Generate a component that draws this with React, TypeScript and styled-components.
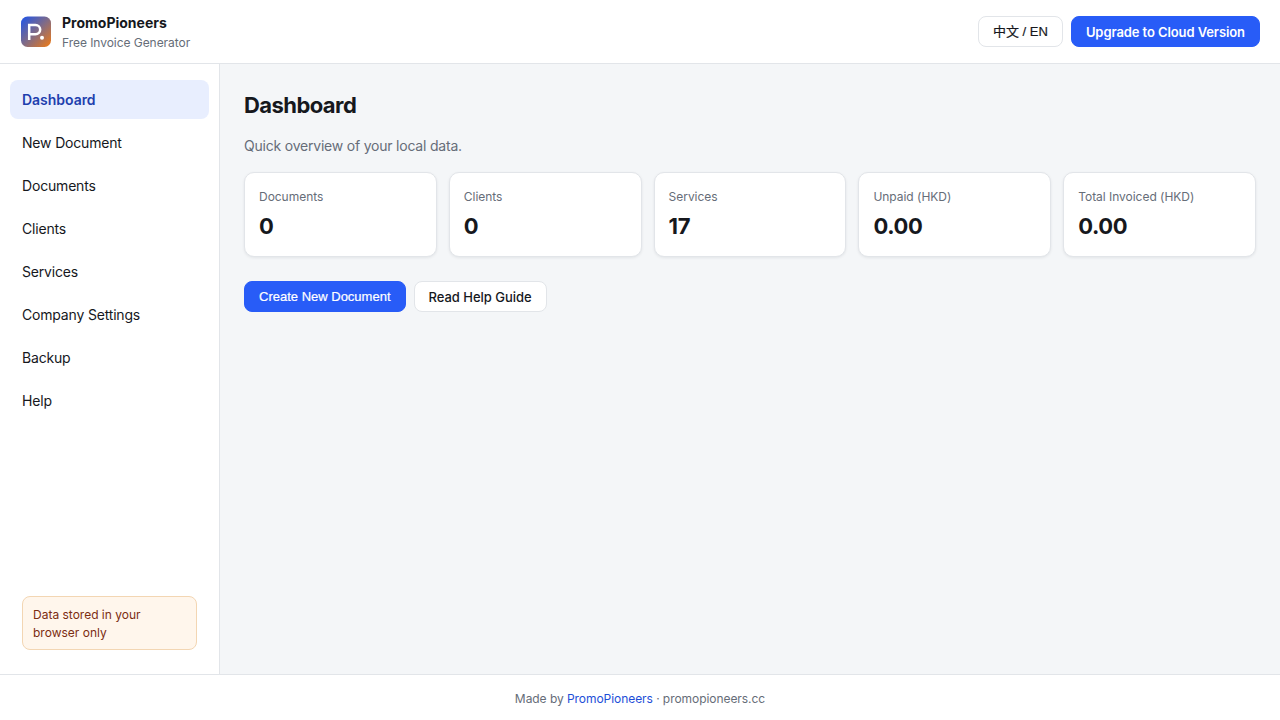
import React from "react";
import styled, { createGlobalStyle, css } from "styled-components";

const GlobalStyle = createGlobalStyle`
  * { box-sizing: border-box; }
  body {
    margin: 0;
    background: #f4f6f8;
    color: #16181d;
    font: 14px/1.5 Inter, "Noto Sans CJK SC", sans-serif;
  }
`;

const Shell = styled.div`
  display: flex;
  flex-direction: column;
  height: 100vh;
`;

const Header = styled.header`
  display: flex;
  align-items: center;
  justify-content: space-between;
  height: 64px;
  flex: none;
  padding: 0 20px;
  background: #fff;
  border-bottom: 1px solid #e2e5e9;
`;

const Brand = styled.div`
  display: flex;
  align-items: center;
  gap: 10px;
`;

const Logo = styled.svg`
  display: block;
  width: 32px;
  height: 32px;
`;

const BrandText = styled.div`
  padding-top: 2px;
`;

const BrandName = styled.div`
  font-size: 14px;
  font-weight: 700;
  line-height: 20px;
`;

const BrandTag = styled.div`
  color: #666d78;
  font-size: 12px;
  line-height: 18px;
  letter-spacing: -0.05px;
  padding-top: 1px;
`;

const Actions = styled.div<{ $top?: number }>`
  display: flex;
  gap: 8px;
  margin-top: ${(p) => p.$top ?? 0}px;
`;

const buttonBase = css<{ $primary?: boolean }>`
  display: flex;
  align-items: center;
  justify-content: center;
  height: 31px;
  padding: 0 14px;
  border: 1px solid ${(p) => (p.$primary ? "#285cf7" : "#e2e5e9")};
  border-radius: 8px;
  background: ${(p) => (p.$primary ? "#285cf7" : "#fff")};
  color: ${(p) => (p.$primary ? "#fff" : "#16181d")};
  white-space: nowrap;
  cursor: pointer;
`;

const Button = styled.button<{ $primary?: boolean }>`
  ${buttonBase}
  font: ${(p) => (p.$primary ? 500 : 400)} 13px/15px "Liberation Sans", "Noto Sans CJK SC", sans-serif;
  -webkit-text-stroke: 0.2px currentColor;
`;

const LinkButton = styled.a<{ $primary?: boolean; $weight: number }>`
  ${buttonBase}
  padding: 3px 14px 0;
  font-size: 13px;
  font-weight: ${(p) => p.$weight};
  letter-spacing: ${(p) => (p.$primary ? "-0.09px" : "-0.03px")};
  text-decoration: none;
`;

const Body = styled.div`
  display: flex;
  flex: 1;
  min-height: 0;
`;

const Sidebar = styled.aside`
  display: flex;
  flex-direction: column;
  justify-content: space-between;
  width: 220px;
  flex: none;
  padding: 16px 10px 24px;
  background: #fff;
  border-right: 1px solid #e2e5e9;
`;

const Nav = styled.nav`
  display: flex;
  flex-direction: column;
  gap: 4px;
`;

const NavItem = styled.a<{ $active?: boolean }>`
  padding: 9px 12px;
  border-radius: 8px;
  color: ${(p) => (p.$active ? "#1e3fae" : "#16181d")};
  background: ${(p) => (p.$active ? "#e8eefe" : "transparent")};
  font-weight: ${(p) => (p.$active ? 600 : 400)};
  letter-spacing: ${(p) => (p.$active ? "-0.03px" : "-0.18px")};
  line-height: 21px;
`;

const Notice = styled.div`
  margin: 0 12px;
  padding: 9px 10px 7px;
  border: 1px solid #f3d6b3;
  border-radius: 8px;
  background: #fff6ec;
  color: #7c2d12;
  font-size: 12px;
  line-height: 18px;
`;

const Main = styled.main`
  flex: 1;
  padding: 25px 24px 24px;
`;

const Title = styled.h1`
  margin: 0 0 13px;
  font-size: 22px;
  font-weight: 700;
  line-height: 33px;
  letter-spacing: -0.57px;
`;

const Subtitle = styled.p`
  margin: 0 0 16px;
  color: #666d78;
  line-height: 21px;
  letter-spacing: -0.21px;
`;

const Stats = styled.div`
  display: grid;
  grid-template-columns: repeat(5, 1fr);
  gap: 12px;
`;

const Card = styled.div`
  height: 85px;
  padding: 15px 14px 13px;
  border: 1px solid #e2e5e9;
  border-radius: 10px;
  background: #fff;
  box-shadow: 0 1px 3px rgba(16, 24, 40, 0.08);
`;

const CardLabel = styled.div`
  color: #666d78;
  font-size: 12px;
  line-height: 18px;
  letter-spacing: -0.03px;
`;

const CardValue = styled.div`
  margin-top: 4px;
  font-size: 22px;
  font-weight: 700;
  line-height: 33px;
  letter-spacing: -0.4px;
`;

const Footer = styled.footer`
  height: 46px;
  flex: none;
  padding: 15px 0;
  border-top: 1px solid #e2e5e9;
  background: #fff;
  color: #666d78;
  font-size: 12px;
  line-height: 18px;
  letter-spacing: -0.055px;
  text-align: center;
`;

const FooterLink = styled.a`
  color: #1d4ed8;
`;

const pages = ["Dashboard", "New Document", "Documents", "Clients", "Services", "Company Settings", "Backup", "Help"];

const stats = [
  ["Documents", "0"],
  ["Clients", "0"],
  ["Services", "17"],
  ["Unpaid (HKD)", "0.00"],
  ["Total Invoiced (HKD)", "0.00"],
];

export default function App() {
  return (
    <Shell>
      <GlobalStyle />
      <Header>
        <Brand>
          <Logo viewBox="0 0 32 32">
            <defs>
              <linearGradient id="brand" x1="0" y1="0" x2="1" y2="1">
                <stop offset="0.1" stopColor="#3058d8" />
                <stop offset="0.5" stopColor="#806b87" />
                <stop offset="0.92" stopColor="#df7825" />
              </linearGradient>
            </defs>
            <rect x="1" y="0.5" width="30" height="30.5" rx="6.5" fill="url(#brand)" />
            <path d="M9.2 23.9V8.9h6.3a4.6 4.6 0 0 1 0 9.4H9.2" fill="none" stroke="#fff" strokeWidth="2.5" />
            <circle cx="22" cy="21.8" r="2" fill="#fff" />
          </Logo>
          <BrandText>
            <BrandName>PromoPioneers</BrandName>
            <BrandTag>Free Invoice Generator</BrandTag>
          </BrandText>
        </Brand>
        <Actions>
          <Button>中文 / EN</Button>
          <LinkButton $primary $weight={600}>Upgrade to Cloud Version</LinkButton>
        </Actions>
      </Header>
      <Body>
        <Sidebar>
          <Nav>
            {pages.map((page, i) => (
              <NavItem key={page} $active={i === 0}>{page}</NavItem>
            ))}
          </Nav>
          <Notice>Data stored in your browser only</Notice>
        </Sidebar>
        <Main>
          <Title>Dashboard</Title>
          <Subtitle>Quick overview of your local data.</Subtitle>
          <Stats>
            {stats.map(([label, value]) => (
              <Card key={label}>
                <CardLabel>{label}</CardLabel>
                <CardValue>{value}</CardValue>
              </Card>
            ))}
          </Stats>
          <Actions $top={24}>
            <Button $primary>Create New Document</Button>
            <LinkButton $weight={500}>Read Help Guide</LinkButton>
          </Actions>
        </Main>
      </Body>
      <Footer>
        Made by <FooterLink>PromoPioneers</FooterLink> · promopioneers.cc
      </Footer>
    </Shell>
  );
}
